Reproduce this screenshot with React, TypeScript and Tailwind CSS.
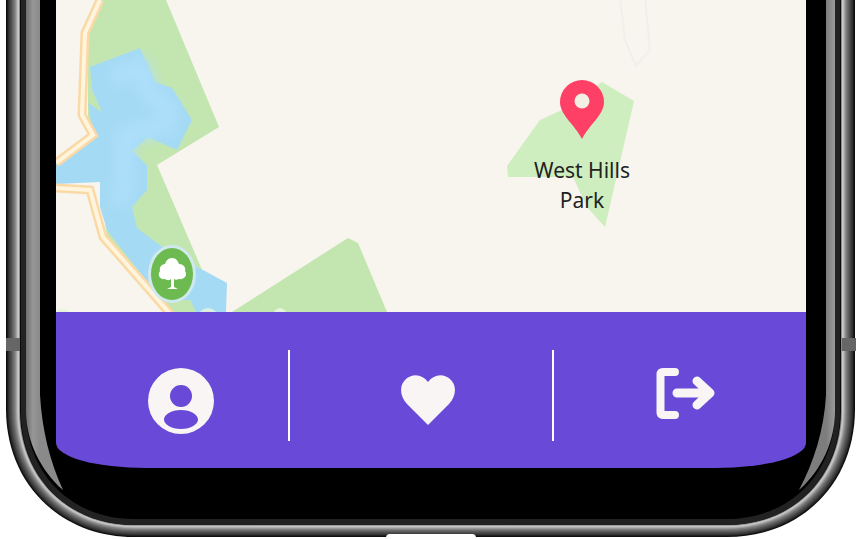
import React from 'react';

const frameShape = (x0: number, x1: number, y: number, r: number) =>
  `M${x0} -10 V${y - r} C${x0} ${y - r * 0.42} ${x0 + r * 0.42} ${y} ${x0 + r} ${y} H${x1 - r} C${x1 - r * 0.42} ${y} ${x1} ${y - r * 0.42} ${x1} ${y - r} V-10 Z`;

const silver = ['#0c0c0c', '#1c1c1c', '#2e2e2e', '#3a3a3a', '#464646', '#525252', '#5f5f5f', '#6c6c6c', '#7b7b7b', '#8c8c8c', '#a2a2a2', '#bebebe', '#c8c8c8', '#8c8c8c'];

const PhoneFrame = () => (
  <svg className="absolute inset-0" width="862" height="539" viewBox="0 0 862 539">
    <defs>
      <linearGradient id="leftBand" x1="26" x2="40" y1="0" y2="0" gradientUnits="userSpaceOnUse">
        <stop offset="0" stopColor="#6f6f6f" />
        <stop offset="0.5" stopColor="#979797" />
        <stop offset="1" stopColor="#8a8a8a" />
      </linearGradient>
      <linearGradient id="rightBand" x1="826" x2="835" y1="0" y2="0" gradientUnits="userSpaceOnUse">
        <stop offset="0" stopColor="#7d7d7d" />
        <stop offset="1" stopColor="#9a9a9a" />
      </linearGradient>
    </defs>
    {silver.map((color, i) => (
      <path key={i} d={frameShape(6 + i, 855 - i, 537 - i * 0.86, 128 - i)} fill={color} />
    ))}
    <path d={frameShape(20, 841, 525, 114)} fill="#0a0a0a" />
    <path d={frameShape(21, 840, 525, 113)} fill="#222222" />
    <path d={frameShape(26, 835, 519, 108)} fill="#000000" />
    <path d="M26 -10 H40 V395 C42 430 50 462 63 490 C40 470 26 440 26 411 Z" fill="url(#leftBand)" />
    <path d="M835 -10 H826 V395 C824 430 814 462 799 490 C822 470 835 440 835 411 Z" fill="url(#rightBand)" />
    <rect x="6" y="338" width="14" height="13" fill="#666666" />
    <rect x="842" y="338" width="14" height="13" fill="#666666" />
    <path d="M386 539 V538 Q386 534 390 534 H472 Q476 534 476 538 V539 Z" fill="#ffffff" />
  </svg>
);

const MapView = () => (
  <div className="relative h-[312px] w-full overflow-hidden bg-[#f8f4ee]">
    <svg className="absolute inset-0 blur-[0.5px]" width="750" height="312" viewBox="56 0 750 312">
      <defs>
        <filter id="lakeGlow" x="-30%" y="-30%" width="160%" height="160%">
          <feGaussianBlur stdDeviation="6" />
        </filter>
      </defs>
      <path d="M620 -2 L625 40 L636 66 L650 50 L645 -2" fill="none" stroke="#f1efea" strokeWidth="2" />
      <path d="M97 0 H166 L219 127 L157 165 L203 272 L210 312 H165 L107 237 L100 182 H88 V33 Z" fill="#c3e6b0" />
      <path d="M232 312 L348 238 L358 243 L387 312 Z" fill="#c3e6b0" />
      <path d="M602 82 L634 101 L605 227 L587 207 L573 177 L508 177 L507 166 L540 120 L562 110 Z" fill="#cfeebf" />
      <path d="M90 67 L140 48 L155 82 L172 88 L192 120 L177 150 L148 137 L132 151 L147 165 L147 190 L132 207 L137 228 L157 243 L185 262 L203 270 L227 283 L226 312 L196 312 L190 300 L160 300 L143 277 L107 230 L100 207 L100 182 L56 184 L56 163 L93 135 L88 103 L102 112 L92 90 Z" fill="#a5daf4" />
      <path d="M112 78 L140 68 L150 95 L168 108 L165 125 L125 135 L125 180 L120 205" fill="none" stroke="#addffa" strokeWidth="18" filter="url(#lakeGlow)" />
      <path d="M196 312 L190 300 L160 300 L170 312 Z" fill="#c3e6b0" />
      <path d="M100 0 L85 33 L82 115 L93 135 L56 163" fill="none" stroke="#fbd9a6" strokeWidth="9" />
      <path d="M100 0 L85 33 L82 115 L93 135 L56 163" fill="none" stroke="#fff5dd" strokeWidth="4" />
      <path d="M56 188 L90 190 L103 237 L172 316" fill="none" stroke="#fbd9a6" strokeWidth="9" />
      <path d="M56 188 L90 190 L103 237 L172 316" fill="none" stroke="#fff5dd" strokeWidth="4" />
      <circle cx="208" cy="318" r="10" fill="#d9efe4" />
      <circle cx="280" cy="314" r="6" fill="#e6f4dc" />
      <circle cx="63" cy="318" r="9" fill="#e6f4dc" />
      <ellipse cx="172" cy="274" rx="24" ry="29" fill="#cfe9ee" />
      <ellipse cx="172" cy="274" rx="21" ry="26" fill="#6dbb50" />
      <path d="M172 258 C176 258 178 261 179 264 C184 264 186 268 185 271 C188 275 184 280 179 279 C177 280 175 280 174 279 L174 287 L178 289 H167 L171 287 L171 279 C169 281 166 280 165 279 C160 280 157 275 160 271 C159 267 162 264 165 264 C166 261 168 258 172 258 Z" fill="#ffffff" />
      <path d="M582 139 C575 125 560 115 560 102 A22 22 0 0 1 604 102 C604 115 589 125 582 139 Z" fill="#ff4066" />
      <circle cx="582" cy="101" r="7.5" fill="#f3efe2" />
    </svg>
    <p className="absolute left-[465px] top-[155px] w-[122px] text-center font-['Noto_Sans',sans-serif] text-[21px] leading-[30px] text-[#222222]">
      West Hills Park
    </p>
  </div>
);

const BottomBar = () => (
  <div className="flex h-[156px] w-full rounded-b-[90px_25px] bg-[#6949d7] pt-[38px]">
    <div className="flex h-[91px] w-[232px] items-start pl-[92px] pt-[18px]">
      <svg width="66" height="66" viewBox="0 0 66 66">
        <path
          fillRule="evenodd"
          d="M33 0 A33 33 0 1 1 33 66 A33 33 0 1 1 33 0 Z M33 17 A11 11 0 1 0 33 39 A11 11 0 1 0 33 17 Z M33 42 C23 42 16 47 16 51.5 C16 56 23 61 33 61 C43 61 50 56 50 51.5 C50 47 43 42 33 42 Z"
          fill="#f8f5f4"
        />
      </svg>
    </div>
    <div className="h-[91px] w-[2px] bg-white" />
    <div className="flex h-[91px] w-[262px] items-start pl-[110px] pt-[24px]">
      <svg width="56" height="52" viewBox="0 0 56 52">
        <path
          d="M28 51 L7 30 C0 23 -1 12 5 6 C12 -1 22 0 28 8 C34 0 44 -1 51 6 C57 12 56 23 49 30 Z"
          fill="#f8f5f4"
        />
      </svg>
    </div>
    <div className="h-[91px] w-[2px] bg-white" />
    <div className="flex h-[91px] flex-1 items-start pl-[102px] pt-[17px]">
      <svg width="62" height="54" viewBox="0 0 62 54" fill="none" stroke="#f8f5f4" strokeLinecap="round" strokeLinejoin="round">
        <path d="M19 5 H7 Q4.5 5 4.5 7.5 V45.5 Q4.5 48 7 48 H19" strokeWidth="8" />
        <path d="M21 26 H53 M41 14 L54 26 L41 38" strokeWidth="9" />
      </svg>
    </div>
  </div>
);

export default function App() {
  return (
    <div className="relative h-[539px] w-[862px] overflow-hidden bg-white">
      <PhoneFrame />
      <div className="relative ml-[56px] flex h-[468px] w-[750px] flex-col">
        <MapView />
        <BottomBar />
      </div>
    </div>
  );
}
